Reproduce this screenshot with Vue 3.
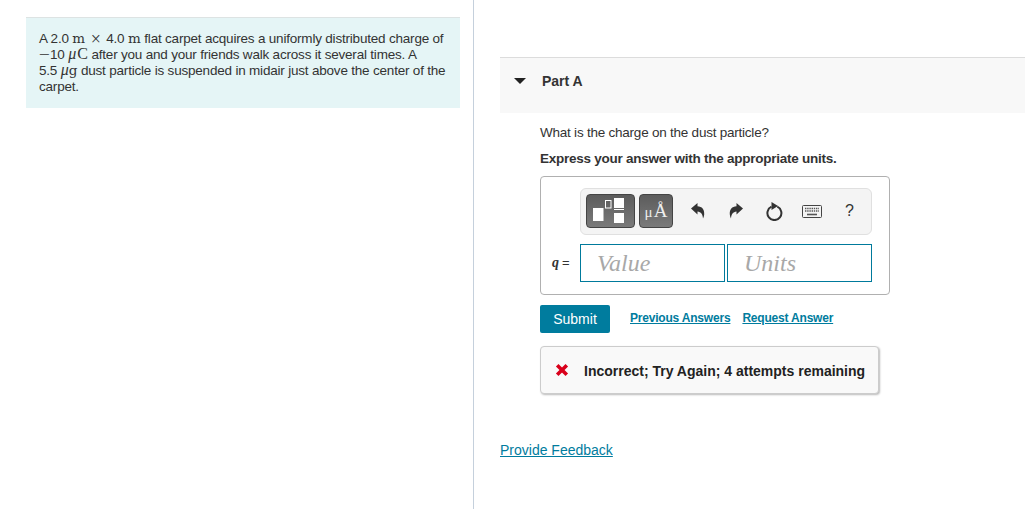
<template>
  <div class="page">
    <section class="left">
      <div class="statement">
        <p>
          A 2.0 <span class="m">m</span> <span class="times">×</span> 4.0 <span class="m">m</span> flat carpet acquires a uniformly distributed charge of<br />
          <span class="minus">−</span>10 <span class="mu">μ</span><span class="cap">C</span> after you and your friends walk across it several times. A<br />
          5.5 <span class="mu">μ</span><span class="m">g</span> dust particle is suspended in midair just above the center of the<br />
          carpet.
        </p>
      </div>
    </section>

    <section class="right">
      <div class="part-head">
        <span class="caret"></span>
        <span class="part-title">Part A</span>
      </div>

      <div class="part-body">
        <p class="question">What is the charge on the dust particle?</p>
        <p class="instruction">Express your answer with the appropriate units.</p>

        <div class="answer-box">
          <div class="toolbar">
            <button class="tool tool-templates" aria-label="Templates">
              <svg width="47" height="32" viewBox="0 0 47 32">
                <rect x="6" y="13" width="10.5" height="13" fill="#fff" />
                <rect x="18.5" y="5.5" width="5.5" height="7.5" fill="none" stroke="#fff" />
                <rect x="27" y="3" width="10" height="10" fill="#fff" />
                <rect x="27" y="14" width="10" height="1" fill="#fff" />
                <rect x="27" y="18" width="10" height="10" fill="#fff" />
              </svg>
            </button>
            <button class="tool tool-units" aria-label="Units"><span class="micro">μ</span>Å</button>
            <div class="actions">
              <svg class="icon" width="14" height="16" viewBox="0 0 14 16">
                <path d="M0 5.5 6.5 0V3.3C11 3.5 13.6 6.5 13.2 11.5 13 13 12.6 14.5 12 15.5 11.8 11.5 10 8.8 6.5 8.5V11.5Z" fill="#333" />
              </svg>
              <svg class="icon" width="14" height="16" viewBox="0 0 14 16">
                <path d="M14 5.5 7.5 0V3.3C3 3.5.4 6.5.8 11.5 1 13 1.4 14.5 2 15.5 2.2 11.5 4 8.8 7.5 8.5V11.5Z" fill="#333" />
              </svg>
              <svg class="icon" width="17" height="19" viewBox="0 0 17 19">
                <path d="M11.3 4.7A7 7 0 1 1 5.5 4.7" fill="none" stroke="#333" stroke-width="2" />
                <path d="M5.5 0 12 4 5.5 8Z" fill="#333" />
              </svg>
              <svg class="icon" width="20" height="13" viewBox="0 0 20 13">
                <rect x="0.5" y="0.5" width="19" height="12" rx="1" fill="#f4f4f4" stroke="#444" />
                <path d="M3 3.5h14M3 6h14" stroke="#555" stroke-width="1.4" stroke-dasharray="1.4 .8" />
                <path d="M5 9.5h10" stroke="#555" stroke-width="1.6" />
              </svg>
              <span class="help">?</span>
            </div>
          </div>

          <div class="input-row">
            <span class="label"><i>q</i> <span class="eq">=</span></span>
            <div class="field">Value</div>
            <div class="field">Units</div>
          </div>
        </div>

        <div class="submit-row">
          <button class="submit">Submit</button>
          <a class="link first">Previous Answers</a>
          <a class="link">Request Answer</a>
        </div>

        <div class="feedback">
          <svg width="14" height="14" viewBox="0 0 14 14">
            <path d="M2.2 2.2 11.8 11.8M11.8 2.2 2.2 11.8" stroke="#d9001b" stroke-width="3.6" />
          </svg>
          <span>Incorrect; Try Again; 4 attempts remaining</span>
        </div>
      </div>

      <a class="provide">Provide Feedback</a>
    </section>
  </div>
</template>

<script setup>
</script>

<style>
html, body { margin: 0; height: 100%; overflow: hidden; background: #fff; }
</style>

<style scoped>
.page {
  display: flex;
  height: 509px;
  font-family: "Liberation Sans", Arial, sans-serif;
  color: #333;
  font-size: 14px;
}

/* left pane */
.left {
  flex: none;
  width: 474px;
  box-sizing: border-box;
  border-right: 1px solid #c5d0dc;
  padding: 17px 13px 0 26px;
}
.statement {
  background: #e5f5f6;
  border-top: 1px solid #dde3e3;
  height: 91px;
  box-sizing: border-box;
  padding: 13px 0 0 13px;
}
.statement p { margin: 0; font-size: 13.5px; line-height: 16px; white-space: nowrap; letter-spacing: -0.2px; }
.m { font-family: "DejaVu Serif", serif; font-size: 13.5px; line-height: 0; letter-spacing: 0; }
.mu { font-family: "Liberation Serif", serif; font-style: italic; font-size: 16px; line-height: 0; letter-spacing: 0; }
.cap { font-family: "Liberation Serif", serif; font-size: 16px; line-height: 0; letter-spacing: 0; margin-left: 1px; }
.times { font-family: "Liberation Serif", serif; margin: 0 2px; font-size: 18px; line-height: 0; vertical-align: -2px; }
.minus {
  display: inline-block;
  width: 11px;
  font-family: "Liberation Serif", serif;
  font-size: 14px;
  line-height: 0;
  transform: scaleX(1.4);
  transform-origin: left center;
}

/* right pane */
.right { flex: 1; padding: 57px 0 0 26px; min-width: 0; }
.part-head {
  height: 56px;
  box-sizing: border-box;
  background: #f8f8f8;
  border-top: 1px solid #dcdcdc;
  padding: 15px 0 0 14px;
  display: flex;
  align-items: flex-start;
}
.caret {
  width: 0;
  height: 0;
  margin-top: 5px;
  border-left: 6px solid transparent;
  border-right: 6px solid transparent;
  border-top: 6px solid #222;
}
.part-title { margin-left: 16px; font-weight: 700; line-height: 16px; color: #333; }

.part-body { padding: 12px 0 0 40px; }
.question { margin: 0; font-size: 13.5px; line-height: 16px; letter-spacing: -0.23px; }
.instruction { margin: 10px 0 0; font-size: 13.5px; line-height: 16px; font-weight: 700; letter-spacing: -0.25px; }

.answer-box {
  width: 350px;
  height: 119px;
  box-sizing: border-box;
  margin-top: 9px;
  border: 1px solid #b0b0b0;
  border-radius: 4px;
  padding: 11px 17px 0 39px;
}
.toolbar {
  height: 47px;
  box-sizing: border-box;
  background: #f4f4f4;
  border: 1px solid #e0e0e0;
  border-radius: 6px;
  padding: 5px 0 0 5px;
  display: flex;
}
.tool {
  padding: 0;
  height: 34px;
  border: 1px solid #444;
  border-radius: 4px;
  background: linear-gradient(#5c5c5c, #7a7a7a);
}
.tool-templates { width: 49px; }
.tool-templates svg { display: block; }
.tool-units {
  width: 34px;
  margin-left: 4px;
  color: #eee;
  font-family: "Liberation Serif", serif;
  font-size: 19px;
}
.micro { font-size: 15px; margin-right: 1px; }
.actions { display: flex; align-items: center; height: 34px; margin-left: 18px; }
.icon { flex: none; }
.actions .icon:nth-child(2) { margin-left: 24px; }
.actions .icon:nth-child(3) { margin-left: 23px; }
.actions .icon:nth-child(4) { margin-left: 19px; }
.help { margin-left: 23px; font-size: 16px; color: #333; }

.input-row { display: flex; align-items: center; margin-top: 9px; margin-left: -29px; }
.label {
  width: 28px;
  padding-left: 1px;
  font-family: "Liberation Serif", serif;
  font-size: 12px;
  color: #333;
}
.label i { font-size: 14px; font-weight: 700; }
.eq { font-family: "Liberation Sans", sans-serif; font-size: 13px; }
.field {
  width: 145px;
  height: 38px;
  box-sizing: border-box;
  border: 1px solid #007a9c;
  padding-left: 16px;
  margin-right: 2px;
  font-family: "Liberation Serif", serif;
  font-style: italic;
  font-size: 24px;
  line-height: 37px;
  color: #a8a8a8;
}
.field + .field { margin-right: 0; }

.submit-row { display: flex; align-items: center; margin-top: 10px; height: 28px; }
.submit {
  width: 70px;
  height: 28px;
  padding: 0;
  background: #007c9e;
  color: #fff;
  border: none;
  border-radius: 2px;
  font: 14px "Liberation Sans", Arial, sans-serif;
}
.link {
  font-size: 12px;
  letter-spacing: -0.2px;
  font-weight: 700;
  color: #007c9e;
  text-decoration: underline;
  margin-left: 12px;
  position: relative;
  top: -1px;
}
.link.first { margin-left: 20px; }

.feedback {
  width: 339px;
  height: 48px;
  box-sizing: border-box;
  margin-top: 13px;
  border: 1px solid #ccc;
  border-radius: 4px;
  box-shadow: 1px 1px 2px #bbb;
  background: #f9f9f9;
  display: flex;
  align-items: center;
  padding: 2px 0 0 14px;
  font-weight: 700;
  color: #222;
}
.feedback svg { margin-top: -2px; }
.feedback span { margin-left: 15px; white-space: nowrap; }

.provide {
  display: inline-block;
  margin-top: 48px;
  color: #007c9e;
  text-decoration: underline;
}
</style>
